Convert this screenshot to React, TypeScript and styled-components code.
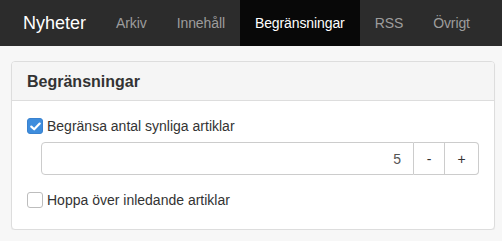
import React, { useState } from "react";
import styled, { createGlobalStyle } from "styled-components";

const GlobalStyle = createGlobalStyle`
  html, body {
    margin: 0;
    padding: 0;
    background: #f7f7f7;
    font-family: "Liberation Sans", Arial, sans-serif;
    font-size: 14px;
    color: #333;
  }
`;

const Navbar = styled.nav`
  display: flex;
  align-items: stretch;
  height: 46px;
  padding-left: 8px;
  background: #2c2c2c;
`;

const Brand = styled.a`
  display: flex;
  align-items: center;
  padding: 0 15px;
  font-size: 18px;
  color: #fff;
  text-decoration: none;
`;

const NavItem = styled.a<{ $active?: boolean }>`
  display: flex;
  align-items: center;
  padding: 0 15px;
  font-size: 14px;
  letter-spacing: -0.1px;
  text-decoration: none;
  color: ${(p) => (p.$active ? "#fff" : "#9d9d9d")};
  background: ${(p) => (p.$active ? "#080808" : "transparent")};
`;

const Page = styled.main`
  padding: 15px 7px 0 11px;
`;

const Panel = styled.section`
  background: #fff;
  border: 1px solid #ddd;
  border-radius: 4px;
  box-shadow: 0 1px 1px rgba(0, 0, 0, 0.05);
`;

const PanelHeading = styled.div`
  height: 38px;
  display: flex;
  align-items: center;
  padding: 0 15px;
  background: #f5f5f5;
  border-bottom: 1px solid #ddd;
  border-radius: 3px 3px 0 0;
`;

const PanelTitle = styled.h3`
  margin: 2px 0 0;
  font-size: 16px;
  font-weight: bold;
  color: #333;
`;

const PanelBody = styled.div`
  display: flex;
  flex-direction: column;
  padding: 15px 15px 19px;
`;

const CheckRow = styled.label`
  display: flex;
  align-items: center;
  gap: 4px;
  height: 20px;
  cursor: pointer;
  color: #333;
`;

const Box = styled.span<{ $checked: boolean }>`
  width: 16px;
  height: 16px;
  box-sizing: border-box;
  border-radius: 3px;
  display: flex;
  align-items: center;
  justify-content: center;
  background: ${(p) => (p.$checked ? "#3e8ddd" : "#fff")};
  border: 1px solid ${(p) => (p.$checked ? "#3a82cf" : "#bdbdbd")};
`;

const InputGroup = styled.div`
  display: flex;
  height: 33px;
  margin: 6px 0 15px 14px;
  box-sizing: border-box;
`;

const NumberField = styled.input`
  flex: 1;
  min-width: 0;
  box-sizing: border-box;
  height: 100%;
  border: 1px solid #ccc;
  border-radius: 4px 0 0 4px;
  padding: 0 12px;
  text-align: right;
  font-family: inherit;
  font-size: 14px;
  color: #555;
  outline: none;
`;

const StepButton = styled.button<{ $last?: boolean }>`
  width: ${(p) => (p.$last ? 34 : 31)}px;
  height: 100%;
  border: 1px solid #ccc;
  border-left: none;
  border-radius: ${(p) => (p.$last ? "0 4px 4px 0" : "0")};
  background: #fff;
  font-family: inherit;
  font-size: 14px;
  color: #333;
  padding: 0;
  cursor: pointer;
`;

function Check({ checked, onToggle, label }: { checked: boolean; onToggle: () => void; label: string }) {
  return (
    <CheckRow onClick={onToggle}>
      <Box $checked={checked}>
        {checked && (
          <svg width="11" height="9" viewBox="0 0 11 9">
            <path d="M1.3 4.6 L4.2 7.3 L9.7 1.6" fill="none" stroke="#fff" strokeWidth="2.2" strokeLinecap="round" strokeLinejoin="round" />
          </svg>
        )}
      </Box>
      <span>{label}</span>
    </CheckRow>
  );
}

export default function App() {
  const [limit, setLimit] = useState(true);
  const [skip, setSkip] = useState(false);
  const [count, setCount] = useState(5);
  const tabs = ["Arkiv", "Innehåll", "Begränsningar", "RSS", "Övrigt"];

  return (
    <>
      <GlobalStyle />
      <Navbar>
        <Brand>Nyheter</Brand>
        {tabs.map((t) => (
          <NavItem key={t} $active={t === "Begränsningar"}>
            {t}
          </NavItem>
        ))}
      </Navbar>
      <Page>
        <Panel>
          <PanelHeading>
            <PanelTitle>Begränsningar</PanelTitle>
          </PanelHeading>
          <PanelBody>
            <Check checked={limit} onToggle={() => setLimit(!limit)} label="Begränsa antal synliga artiklar" />
            <InputGroup>
              <NumberField value={count} onChange={(e) => setCount(Number(e.target.value) || 0)} />
              <StepButton onClick={() => setCount(count - 1)}>-</StepButton>
              <StepButton $last onClick={() => setCount(count + 1)}>+</StepButton>
            </InputGroup>
            <Check checked={skip} onToggle={() => setSkip(!skip)} label="Hoppa över inledande artiklar" />
          </PanelBody>
        </Panel>
      </Page>
    </>
  );
}
